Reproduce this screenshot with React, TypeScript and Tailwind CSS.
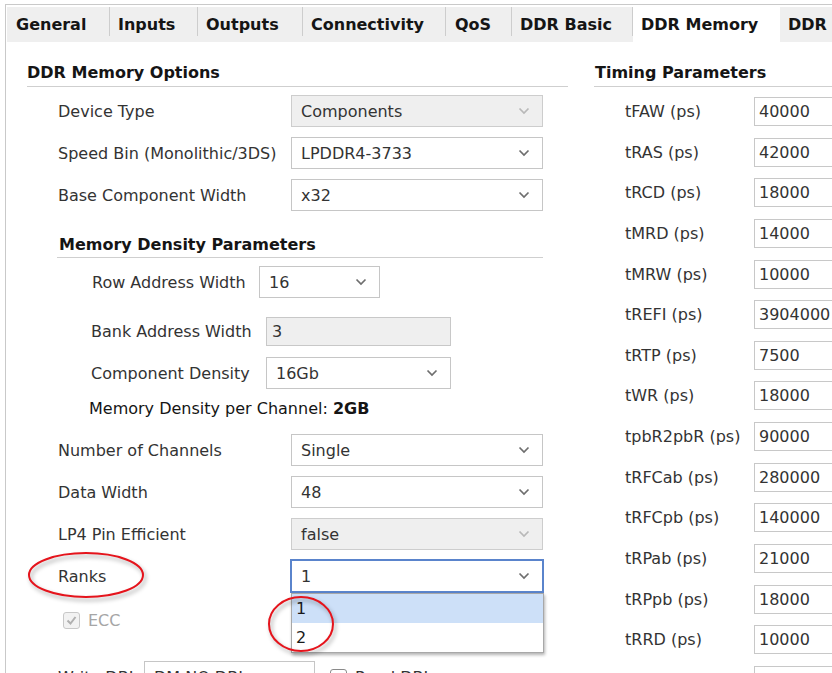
import React from 'react';

const tabs = [
    { name: 'General', w: 'w-[102px]', pl: 'pl-[9px]' },
    { name: 'Inputs', w: 'w-[87px]', pl: 'pl-[8px]' },
    { name: 'Outputs', w: 'w-[104px]', pl: 'pl-[8px]' },
    { name: 'Connectivity', w: 'w-[142px]', pl: 'pl-[8px]' },
    { name: 'QoS', w: 'w-[65px]', pl: 'pl-[9px]' },
    { name: 'DDR Basic', w: 'w-[120px]', pl: 'pl-[8px]' },
];

const timing = [
    ['tFAW (ps)', '40000'],
    ['tRAS (ps)', '42000'],
    ['tRCD (ps)', '18000'],
    ['tMRD (ps)', '14000'],
    ['tMRW (ps)', '10000'],
    ['tREFI (ps)', '3904000'],
    ['tRTP (ps)', '7500'],
    ['tWR (ps)', '18000'],
    ['tpbR2pbR (ps)', '90000'],
    ['tRFCab (ps)', '280000'],
    ['tRFCpb (ps)', '140000'],
    ['tRPab (ps)', '21000'],
    ['tRPpb (ps)', '18000'],
    ['tRRD (ps)', '10000'],
    ['', ''],
];

const Chevron: React.FC<{ disabled?: boolean }> = ({ disabled }) => (
    <svg width="12" height="8" viewBox="0 0 12 8" className="shrink-0">
        <polyline
            points="1.5,1.5 6,6 10.5,1.5"
            fill="none"
            stroke={disabled ? '#b8b8b8' : '#6e6e6e'}
            strokeWidth="1.7"
        />
    </svg>
);

const Combo: React.FC<{ value: string; w: string; disabled?: boolean; focused?: boolean }> = ({
    value,
    w,
    disabled,
    focused,
}) => (
    <div
        className={`${w} h-[32px] flex items-center justify-between pl-[9px] pr-[12px] border ${
            focused
                ? 'border-[#5a84cc] outline outline-1 outline-[#5a84cc]'
                : disabled
                ? 'border-[#cdcdcd] bg-[#efefef]'
                : 'border-[#c6c6c6] bg-white'
        }`}
    >
        <span>{value}</span>
        <Chevron disabled={disabled} />
    </div>
);

const Row: React.FC<{ label: string; children: React.ReactNode }> = ({ label, children }) => (
    <div className="flex items-center h-[32px] pl-[31px]">
        <span className="w-[233px]">{label}</span>
        {children}
    </div>
);

const Checkbox: React.FC<{ checked?: boolean; disabled?: boolean }> = ({ checked, disabled }) => (
    <div
        className={`w-[17px] h-[17px] rounded-[3px] border flex items-center justify-center ${
            disabled ? 'border-[#c8c8c8] bg-[#f2f2f2]' : 'border-[#8a8a8a] bg-white'
        }`}
    >
        {checked && (
            <svg width="13" height="13" viewBox="0 0 13 13">
                <polyline points="2.5,6.5 5.5,9.5 10.5,3" fill="none" stroke="#b0b0b0" strokeWidth="2" />
            </svg>
        )}
    </div>
);

export default function App() {
    return (
        <div className="relative w-[832px] h-[673px] overflow-hidden bg-white font-['DejaVu_Sans',sans-serif] text-[16px] leading-[19px] text-[#333333]">
            <div className="ml-[5px] mt-[4px] h-[700px] border-l border-t border-[#c9c9c9] pl-[1px] pt-[2px]">
                {/* tab bar */}
                <div className="flex h-[35px] bg-[#efefef] font-bold text-[#151515] whitespace-nowrap">
                    {tabs.map((t) => (
                        <React.Fragment key={t.name}>
                            <div className={`${t.w} ${t.pl} shrink-0 flex items-center`}>{t.name}</div>
                            <div className="w-px h-[29px] shrink-0 bg-[#cdcdcd]" />
                        </React.Fragment>
                    ))}
                    <div className="w-[147px] shrink-0 pl-[8px] flex items-center bg-white">DDR Memory</div>
                    <div className="flex-1 pl-[8px] flex items-center">DDR Advanced</div>
                </div>

                <div className="flex pt-[21px]">
                    {/* left column */}
                    <div className="ml-[20px] w-[541px] shrink-0">
                        <div className="font-bold text-[#151515] pb-[4px] border-b border-[#cfcfcf]">DDR Memory Options</div>
                        <div className="mt-[8px] flex flex-col gap-[10px]">
                            <Row label="Device Type">
                                <Combo value="Components" w="w-[252px]" disabled />
                            </Row>
                            <Row label="Speed Bin (Monolithic/3DS)">
                                <Combo value="LPDDR4-3733" w="w-[252px]" />
                            </Row>
                            <Row label="Base Component Width">
                                <Combo value="x32" w="w-[252px]" />
                            </Row>
                        </div>

                        <div className="ml-[30px] w-[486px] mt-[24px]">
                            <div className="font-bold text-[#151515] pl-[2px] pb-[3px] border-b border-[#cfcfcf]">
                                Memory Density Parameters
                            </div>
                            <div className="mt-[8px] flex items-center h-[32px] pl-[35px]">
                                <span className="w-[167px]">Row Address Width</span>
                                <Combo value="16" w="w-[121px]" />
                            </div>
                            <div className="mt-[19px] flex items-center h-[29px] pl-[34px]">
                                <span className="w-[175px]">Bank Address Width</span>
                                <div className="w-[185px] h-[29px] flex items-center pl-[5px] border border-[#c8c8c8] bg-[#efefef]">3</div>
                            </div>
                            <div className="mt-[11px] flex items-center h-[32px] pl-[34px]">
                                <span className="w-[175px]">Component Density</span>
                                <Combo value="16Gb" w="w-[185px]" />
                            </div>
                            <div className="mt-[10px] pl-[32px] text-[#151515]">
                                Memory Density per Channel: <span className="font-bold">2GB</span>
                            </div>
                        </div>

                        <div className="mt-[16px] flex flex-col gap-[10px]">
                            <Row label="Number of Channels">
                                <Combo value="Single" w="w-[252px]" />
                            </Row>
                            <Row label="Data Width">
                                <Combo value="48" w="w-[252px]" />
                            </Row>
                            <Row label="LP4 Pin Efficient">
                                <Combo value="false" w="w-[252px]" disabled />
                            </Row>
                            <Row label="Ranks">
                                <div className="relative">
                                    <Combo value="1" w="w-[252px]" focused />
                                    <div className="absolute left-0 top-[33px] w-[253px] border border-[#a8a8a8] bg-white shadow-[1px_2px_3px_rgba(0,0,0,0.3)] z-10">
                                        <div className="h-[29px] flex items-center pl-[4px] bg-[#cde0f8] text-[#1a1a1a]">1</div>
                                        <div className="h-[29px] flex items-center pl-[4px] text-[#1a1a1a]">2</div>
                                    </div>
                                </div>
                            </Row>
                        </div>

                        <div className="mt-[20px] flex items-center h-[17px] pl-[36px] gap-[8px] text-[#a6a6a6]">
                            <Checkbox checked disabled />
                            <span>ECC</span>
                        </div>

                        <div className="mt-[32px] flex items-center h-[32px] pl-[31px]">
                            <span className="w-[86px]">Write DBI</span>
                            <Combo value="DM NO DBI" w="w-[171px]" />
                            <div className="ml-[15px]">
                                <Checkbox />
                            </div>
                            <span className="ml-[8px]">Read DBI</span>
                        </div>
                    </div>

                    {/* right column */}
                    <div className="ml-[26px] w-[300px] shrink-0">
                        <div className="font-bold text-[#151515] pl-[1px] pb-[4px] border-b border-[#cfcfcf]">Timing Parameters</div>
                        <div className="mt-[10px] flex flex-col gap-[11.64px]">
                            {timing.map(([label, value], i) => (
                                <div key={i} className="flex items-center h-[29px] pl-[31px]">
                                    <span className="w-[129px]">{label}</span>
                                    <div className="w-[110px] h-[29px] flex items-center pl-[4px] border border-[#c8c8c8] bg-white">
                                        {value}
                                    </div>
                                </div>
                            ))}
                        </div>
                    </div>
                </div>
            </div>

            {/* red annotation ellipses */}
            <svg
                className="absolute left-0 top-0 pointer-events-none z-20"
                width="832"
                height="673"
                style={{ filter: 'drop-shadow(2px 3px 2px rgba(0,0,0,0.35))' }}
            >
                <ellipse cx="86" cy="575" rx="57" ry="22" fill="none" stroke="#e5141c" strokeWidth="2" />
                <ellipse cx="301" cy="624" rx="32" ry="27" fill="none" stroke="#e5141c" strokeWidth="2" />
            </svg>
        </div>
    );
}
